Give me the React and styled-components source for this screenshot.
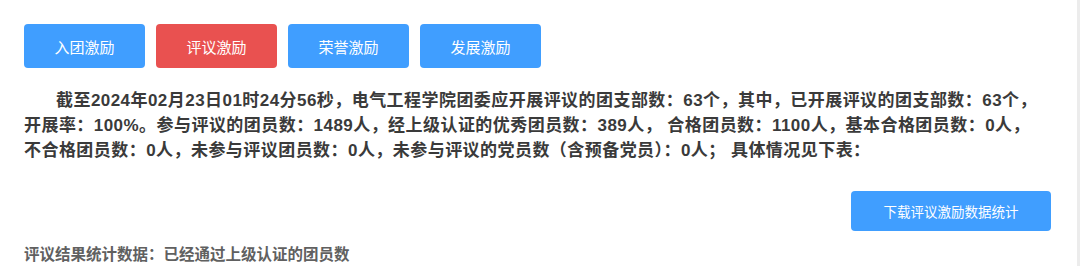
import React from 'react';
import styled, { createGlobalStyle } from 'styled-components';

const GlobalStyle = createGlobalStyle`
  html, body {
    margin: 0;
    padding: 0;
    background: #ececec;
    overflow: hidden;
  }
  body {
    font-family: "Liberation Sans", "Noto Sans CJK SC", sans-serif;
  }
`;

const tabs = [
  { label: '入团激励' },
  { label: '评议激励', active: true },
  { label: '荣誉激励' },
  { label: '发展激励' },
];

const App = () => {
  return (
    <>
      <GlobalStyle />
      <Page>
        <TabRow>
          {tabs.map((t) => (
            <TabButton key={t.label} $active={t.active}>
              {t.label}
            </TabButton>
          ))}
        </TabRow>
        <Summary>
          截至2024年02月23日01时24分56秒，电气工程学院团委应开展评议的团支部数：63个，其中，已开展评议的团支部数：63个，
          <br />
          开展率：100%。参与评议的团员数：1489人，经上级认证的优秀团员数：389人， 合格团员数：1100人，基本合格团员数：0人，
          <br />
          不合格团员数：0人，未参与评议团员数：0人，未参与评议的党员数（含预备党员）：0人； 具体情况见下表：
        </Summary>
        <ActionRow>
          <DownloadButton>下载评议激励数据统计</DownloadButton>
        </ActionRow>
        <SectionTitle>评议结果统计数据：已经通过上级认证的团员数</SectionTitle>
      </Page>
    </>
  );
};

export default App;

// styles

const Page = styled.div`
  width: 1077px;
  height: 266px;
  box-sizing: border-box;
  background: #fff;
  padding: 24px 20px 0 24px;
  display: flex;
  flex-direction: column;
`;

const TabRow = styled.div`
  display: flex;
  gap: 11px;
`;

const TabButton = styled.button`
  width: 121px;
  height: 44px;
  border: none;
  border-radius: 4px;
  background: ${(p) => (p.$active ? '#e95150' : '#409eff')};
  color: #fff;
  font-family: "Noto Sans CJK SC", sans-serif;
  font-size: 15px;
  padding: 0;
  cursor: pointer;
`;

const Summary = styled.p`
  margin: 20px 0 0 0;
  text-indent: 32px;
  font-size: 17px;
  letter-spacing: 0.45px;
  line-height: 25px;
  font-weight: bold;
  color: #3a3a3a;
  white-space: nowrap;
`;

const ActionRow = styled.div`
  display: flex;
  justify-content: flex-end;
  margin-top: 28px;
  padding-right: 6px;
`;

const DownloadButton = styled.button`
  width: 200px;
  height: 40px;
  border: none;
  border-radius: 4px;
  background: #409eff;
  color: #fff;
  font-family: "Noto Sans CJK SC", sans-serif;
  font-size: 13.5px;
  padding: 0;
  cursor: pointer;
`;

const SectionTitle = styled.div`
  margin-top: 14px;
  font-size: 15.5px;
  line-height: 20px;
  font-weight: bold;
  color: #606060;
`;
